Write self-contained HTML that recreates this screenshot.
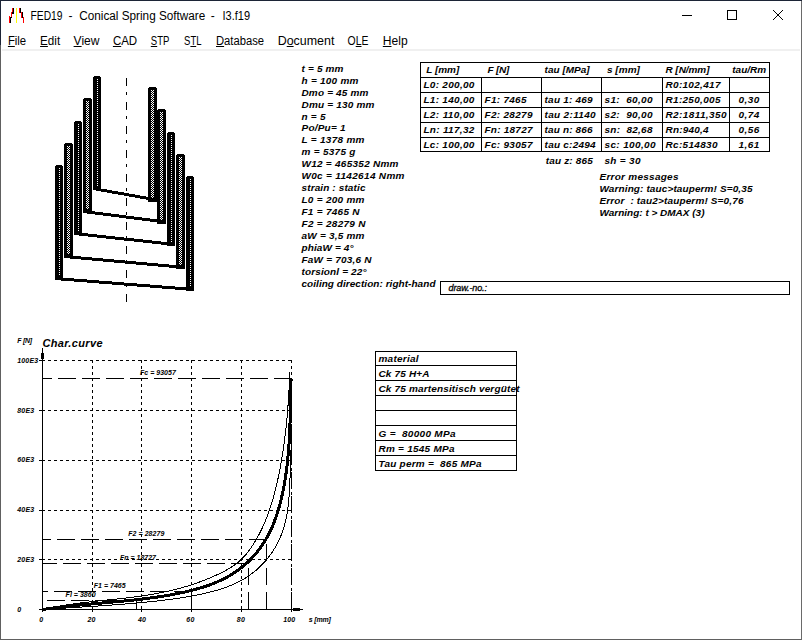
<!DOCTYPE html>
<html><head><meta charset="utf-8"><style>
html,body{margin:0;padding:0;background:#fff;}
body{width:802px;height:640px;position:relative;overflow:hidden;font-family:'Liberation Sans', sans-serif;}
.b{position:absolute;}
.ttl{position:absolute;top:8px;font-size:12px;color:#000;white-space:pre;line-height:15px;}
.mn{position:absolute;top:33px;font-size:12px;color:#000;white-space:pre;line-height:15px;}
svg{position:absolute;left:0;top:0;}
</style></head><body>
<svg width="802" height="640" viewBox="0 0 802 640" shape-rendering="crispEdges">
<rect x="0" y="0" width="802" height="1" fill="#1c2436"/>
<rect x="0" y="0" width="1" height="45" fill="#1c2436"/>
<rect x="0" y="45" width="1" height="595" fill="#606060"/>
<rect x="0" y="639" width="802" height="1" fill="#606060"/>
<rect x="801" y="1" width="1" height="639" fill="#6a6a6a"/>
<rect x="2" y="49" width="798" height="2" fill="#f0f0f0"/>
<rect x="12" y="8" width="1" height="6" fill="#ff0000"/>
<rect x="13" y="8" width="1" height="6" fill="#000"/>
<rect x="11" y="12" width="1" height="6" fill="#ff0000"/>
<rect x="12" y="12" width="1" height="2" fill="#000"/>
<rect x="11" y="17" width="1" height="1" fill="#000"/>
<rect x="9" y="16" width="1" height="7" fill="#ff0000"/>
<rect x="10" y="17" width="1" height="6" fill="#000"/>
<rect x="16" y="8" width="1" height="15" fill="#ffff00"/>
<rect x="19" y="8" width="1" height="5" fill="#ff0000"/>
<rect x="20" y="8" width="1" height="5" fill="#000"/>
<rect x="21" y="12" width="1" height="6" fill="#ff0000"/>
<rect x="22" y="12" width="1" height="6" fill="#000"/>
<rect x="23" y="17" width="1" height="6" fill="#ff0000"/>
<rect x="682" y="15" width="10" height="1" fill="#000"/>
<rect x="727.5" y="10.5" width="9" height="9" fill="none" stroke="#000" stroke-width="1"/>
<rect x="773" y="10" width="1" height="1" fill="#000"/><rect x="782" y="10" width="1" height="1" fill="#000"/><rect x="774" y="11" width="1" height="1" fill="#000"/><rect x="781" y="11" width="1" height="1" fill="#000"/><rect x="775" y="12" width="1" height="1" fill="#000"/><rect x="780" y="12" width="1" height="1" fill="#000"/><rect x="776" y="13" width="1" height="1" fill="#000"/><rect x="779" y="13" width="1" height="1" fill="#000"/><rect x="777" y="14" width="1" height="1" fill="#000"/><rect x="778" y="14" width="1" height="1" fill="#000"/><rect x="778" y="15" width="1" height="1" fill="#000"/><rect x="777" y="15" width="1" height="1" fill="#000"/><rect x="779" y="16" width="1" height="1" fill="#000"/><rect x="776" y="16" width="1" height="1" fill="#000"/><rect x="780" y="17" width="1" height="1" fill="#000"/><rect x="775" y="17" width="1" height="1" fill="#000"/><rect x="781" y="18" width="1" height="1" fill="#000"/><rect x="774" y="18" width="1" height="1" fill="#000"/><rect x="782" y="19" width="1" height="1" fill="#000"/><rect x="773" y="19" width="1" height="1" fill="#000"/>
<g><polygon points="93,187 157,198.5 157,201.5 93,190" fill="#000"/>
<polygon points="83,210 166,220.5 166,223.5 83,213" fill="#000"/>
<polygon points="74,232 175,243 175,246 74,235" fill="#000"/>
<polygon points="64,255 185,266 185,269 64,258" fill="#000"/>
<polygon points="55,277 194,288 194,291 55,280" fill="#000"/>
<rect x="94" y="76" width="6" height="1" fill="#000"/>
<rect x="93" y="77" width="8" height="113" fill="#000"/>
<line x1="97.5" y1="79" x2="97.5" y2="186" stroke="#fff" stroke-width="1" stroke-dasharray="1 1"/>
<rect x="84" y="98" width="7" height="1" fill="#000"/>
<rect x="83" y="99" width="9" height="114" fill="#000"/>
<line x1="86.5" y1="101" x2="86.5" y2="209" stroke="#fff" stroke-width="1" stroke-dasharray="1 1"/>
<line x1="88.5" y1="101" x2="88.5" y2="209" stroke="#fff" stroke-width="1" stroke-dasharray="1 1"/>
<line x1="87.5" y1="102" x2="87.5" y2="209" stroke="#fff" stroke-width="1" stroke-dasharray="1 1"/>
<rect x="75" y="121" width="6" height="1" fill="#000"/>
<rect x="74" y="122" width="8" height="113" fill="#000"/>
<line x1="78.5" y1="124" x2="78.5" y2="231" stroke="#fff" stroke-width="1" stroke-dasharray="1 1"/>
<rect x="65" y="143" width="7" height="1" fill="#000"/>
<rect x="64" y="144" width="9" height="114" fill="#000"/>
<line x1="67.5" y1="146" x2="67.5" y2="254" stroke="#fff" stroke-width="1" stroke-dasharray="1 1"/>
<line x1="69.5" y1="146" x2="69.5" y2="254" stroke="#fff" stroke-width="1" stroke-dasharray="1 1"/>
<line x1="68.5" y1="147" x2="68.5" y2="254" stroke="#fff" stroke-width="1" stroke-dasharray="1 1"/>
<rect x="56" y="165" width="6" height="1" fill="#000"/>
<rect x="55" y="166" width="8" height="114" fill="#000"/>
<line x1="59.5" y1="168" x2="59.5" y2="276" stroke="#fff" stroke-width="1" stroke-dasharray="1 1"/>
<rect x="149" y="87" width="7" height="1" fill="#000"/>
<rect x="148" y="88" width="9" height="113.5" fill="#000"/>
<line x1="151.5" y1="90" x2="151.5" y2="197.5" stroke="#fff" stroke-width="1" stroke-dasharray="1 1"/>
<line x1="153.5" y1="90" x2="153.5" y2="197.5" stroke="#fff" stroke-width="1" stroke-dasharray="1 1"/>
<line x1="152.5" y1="91" x2="152.5" y2="197.5" stroke="#fff" stroke-width="1" stroke-dasharray="1 1"/>
<rect x="158" y="109" width="7" height="1" fill="#000"/>
<rect x="157" y="110" width="9" height="113.5" fill="#000"/>
<line x1="160.5" y1="112" x2="160.5" y2="219.5" stroke="#fff" stroke-width="1" stroke-dasharray="1 1"/>
<line x1="162.5" y1="112" x2="162.5" y2="219.5" stroke="#fff" stroke-width="1" stroke-dasharray="1 1"/>
<line x1="161.5" y1="113" x2="161.5" y2="219.5" stroke="#fff" stroke-width="1" stroke-dasharray="1 1"/>
<rect x="168" y="132" width="6" height="1" fill="#000"/>
<rect x="167" y="133" width="8" height="113" fill="#000"/>
<line x1="171.5" y1="135" x2="171.5" y2="242" stroke="#fff" stroke-width="1" stroke-dasharray="1 1"/>
<rect x="177" y="154" width="7" height="1" fill="#000"/>
<rect x="176" y="155" width="9" height="114" fill="#000"/>
<line x1="179.5" y1="157" x2="179.5" y2="265" stroke="#fff" stroke-width="1" stroke-dasharray="1 1"/>
<line x1="181.5" y1="157" x2="181.5" y2="265" stroke="#fff" stroke-width="1" stroke-dasharray="1 1"/>
<line x1="180.5" y1="158" x2="180.5" y2="265" stroke="#fff" stroke-width="1" stroke-dasharray="1 1"/>
<rect x="187" y="176" width="6" height="1" fill="#000"/>
<rect x="186" y="177" width="8" height="114" fill="#000"/>
<line x1="190.5" y1="179" x2="190.5" y2="287" stroke="#fff" stroke-width="1" stroke-dasharray="1 1"/>
<line x1="126.5" y1="78" x2="126.5" y2="302" stroke="#000" stroke-width="1" stroke-dasharray="8 6 3 7" /></g>
<g><line x1="92.5" y1="360" x2="92.5" y2="609" stroke="#000" stroke-width="1" stroke-dasharray="3 3"/>
<line x1="141.5" y1="360" x2="141.5" y2="609" stroke="#000" stroke-width="1" stroke-dasharray="3 3"/>
<line x1="191.5" y1="360" x2="191.5" y2="609" stroke="#000" stroke-width="1" stroke-dasharray="3 3"/>
<line x1="241.5" y1="360" x2="241.5" y2="609" stroke="#000" stroke-width="1" stroke-dasharray="3 3"/>
<line x1="291.5" y1="360" x2="291.5" y2="609" stroke="#000" stroke-width="1" stroke-dasharray="3 3"/>
<line x1="42" y1="360.5" x2="292" y2="360.5" stroke="#000" stroke-width="1" stroke-dasharray="3 3"/>
<line x1="42" y1="410.5" x2="292" y2="410.5" stroke="#000" stroke-width="1" stroke-dasharray="3 3"/>
<line x1="42" y1="460.5" x2="292" y2="460.5" stroke="#000" stroke-width="1" stroke-dasharray="3 3"/>
<line x1="42" y1="510.5" x2="292" y2="510.5" stroke="#000" stroke-width="1" stroke-dasharray="3 3"/>
<line x1="42" y1="559.5" x2="292" y2="559.5" stroke="#000" stroke-width="1" stroke-dasharray="3 3"/>
<line x1="39" y1="360.5" x2="43" y2="360.5" stroke="#000" stroke-width="1"/>
<line x1="39" y1="410.5" x2="43" y2="410.5" stroke="#000" stroke-width="1"/>
<line x1="39" y1="460.5" x2="43" y2="460.5" stroke="#000" stroke-width="1"/>
<line x1="39" y1="510.5" x2="43" y2="510.5" stroke="#000" stroke-width="1"/>
<line x1="39" y1="559.5" x2="43" y2="559.5" stroke="#000" stroke-width="1"/>
<line x1="39" y1="609.5" x2="43" y2="609.5" stroke="#000" stroke-width="1"/>
<line x1="92.5" y1="609" x2="92.5" y2="612" stroke="#000" stroke-width="1"/>
<line x1="141.5" y1="609" x2="141.5" y2="612" stroke="#000" stroke-width="1"/>
<line x1="191.5" y1="609" x2="191.5" y2="612" stroke="#000" stroke-width="1"/>
<line x1="241.5" y1="609" x2="241.5" y2="612" stroke="#000" stroke-width="1"/>
<line x1="291.5" y1="609" x2="291.5" y2="612" stroke="#000" stroke-width="1"/>
<line x1="42.5" y1="609" x2="42.5" y2="612" stroke="#000" stroke-width="1"/>
<line x1="42.5" y1="348" x2="42.5" y2="610" stroke="#000" stroke-width="1"/>
<rect x="41" y="353" width="3" height="6" fill="#000"/>
<line x1="40" y1="609.5" x2="303" y2="609.5" stroke="#000" stroke-width="1"/>
<rect x="293" y="608" width="7" height="3" fill="#000"/>
<line x1="292" y1="378.5" x2="43" y2="378.5" stroke="#000" stroke-width="1" stroke-dasharray="18 6" />
<line x1="267" y1="539.5" x2="43" y2="539.5" stroke="#000" stroke-width="1" stroke-dasharray="18 6" />
<line x1="248.6" y1="563.5" x2="43" y2="563.5" stroke="#000" stroke-width="1" stroke-dasharray="18 6" />
<line x1="192" y1="591.5" x2="43" y2="591.5" stroke="#000" stroke-width="1" stroke-dasharray="18 6" />
<line x1="137" y1="600.5" x2="47" y2="600.5" stroke="#000" stroke-width="1" stroke-dasharray="18 6" />
<line x1="291.5" y1="609" x2="291.5" y2="378" stroke="#000" stroke-width="1" stroke-dasharray="17 7" />
<line x1="266.5" y1="609" x2="266.5" y2="539.5" stroke="#000" stroke-width="1" stroke-dasharray="17 7" />
<line x1="248.5" y1="609" x2="248.5" y2="563.5" stroke="#000" stroke-width="1" stroke-dasharray="17 7" />
<line x1="191.5" y1="609" x2="191.5" y2="590.5" stroke="#000" stroke-width="1" stroke-dasharray="17 7" />
<line x1="136.5" y1="609" x2="136.5" y2="600" stroke="#000" stroke-width="1" stroke-dasharray="17 7" />
<path d="M42.47,609.51 L44.52,609.21 L46.56,608.91 L48.61,608.62 L50.66,608.34 L52.70,608.07 L54.75,607.80 L56.79,607.55 L58.84,607.30 L60.88,607.05 L62.92,606.81 L64.96,606.58 L67.01,606.36 L69.05,606.13 L71.09,605.92 L73.13,605.71 L75.17,605.50 L77.21,605.30 L79.25,605.10 L81.28,604.90 L83.32,604.71 L85.36,604.52 L87.40,604.33 L89.43,604.15 L91.47,603.96 L93.50,603.78 L95.54,603.60 L97.58,603.42 L99.61,603.24 L101.64,603.06 L103.68,602.88 L105.71,602.70 L107.75,602.52 L109.78,602.34 L111.81,602.16 L113.84,601.97 L115.88,601.79 L117.91,601.60 L119.94,601.41 L121.97,601.21 L124.01,601.02 L126.04,600.81 L128.07,600.61 L130.10,600.40 L132.13,600.19 L134.16,599.97 L136.19,599.74 L138.22,599.51 L140.25,599.28 L142.28,599.04 L144.31,598.79 L146.34,598.53 L148.37,598.27 L150.40,598.00 L152.43,597.73 L154.46,597.44 L156.49,597.15 L158.52,596.84 L160.55,596.53 L162.58,596.21 L164.61,595.88 L166.64,595.54 L168.67,595.19 L170.70,594.83 L172.73,594.46 L174.76,594.08 L176.79,593.68 L178.82,593.28 L180.85,592.86 L182.87,592.42 L184.90,591.98 L186.92,591.51 L188.93,591.03 L190.95,590.54 L192.95,590.02 L194.95,589.49 L196.94,588.94 L198.93,588.37 L200.90,587.78 L202.87,587.17 L204.83,586.54 L206.78,585.88 L208.71,585.20 L210.64,584.50 L212.55,583.77 L214.45,583.02 L216.33,582.24 L218.20,581.43 L220.05,580.59 L221.89,579.73 L223.71,578.84 L225.52,577.91 L227.30,576.96 L229.07,575.98 L230.81,574.96 L232.54,573.91 L234.24,572.82 L235.93,571.70 L237.59,570.55 L239.22,569.36 L240.84,568.13 L242.43,566.87 L243.99,565.57 L245.53,564.24 L247.04,562.87 L248.52,561.46 L249.98,560.03 L251.41,558.56 L252.80,557.06 L254.17,555.54 L255.51,553.98 L256.82,552.40 L258.10,550.79 L259.35,549.16 L260.56,547.50 L261.75,545.82 L262.89,544.11 L264.01,542.39 L265.09,540.64 L266.13,538.88 L267.14,537.10 L268.11,535.30 L269.06,533.48 L269.96,531.65 L270.84,529.80 L271.69,527.94 L272.50,526.07 L273.29,524.18 L274.05,522.28 L274.78,520.36 L275.49,518.44 L276.16,516.50 L276.82,514.56 L277.45,512.61 L278.06,510.65 L278.64,508.68 L279.20,506.71 L279.75,504.73 L280.27,502.74 L280.78,500.76 L281.26,498.76 L281.73,496.77 L282.19,494.77 L282.62,492.77 L283.04,490.76 L283.45,488.76 L283.83,486.74 L284.21,484.73 L284.57,482.72 L284.91,480.70 L285.24,478.68 L285.55,476.65 L285.86,474.63 L286.14,472.60 L286.42,470.57 L286.68,468.54 L286.93,466.51 L287.17,464.47 L287.40,462.44 L287.62,460.40 L287.82,458.36 L288.02,456.32 L288.20,454.27 L288.38,452.23 L288.55,450.18 L288.70,448.14 L288.85,446.09 L288.99,444.04 L289.12,441.99 L289.25,439.94 L289.36,437.89 L289.47,435.84 L289.58,433.79 L289.67,431.74 L289.76,429.68 L289.85,427.63 L289.93,425.58 L290.00,423.53 L290.07,421.47 L290.14,419.42 L290.20,417.37 L290.26,415.32 L290.31,413.27 L290.36,411.21 L290.41,409.16 L290.46,407.11 L290.51,405.07 L290.55,403.02 L290.59,400.97 L290.64,398.92 L290.68,396.88 L290.72,394.84 L290.76,392.79 L290.80,390.75 L290.84,388.71 L290.89,386.67 L290.93,384.64 L290.98,382.60 L291.03,380.57 L291.08,378.54" fill="none" stroke="#000" stroke-width="3" stroke-linejoin="round" shape-rendering="crispEdges"/>
<path d="M42.52,609.36 L44.51,608.92 L46.50,608.49 L48.49,608.08 L50.48,607.68 L52.48,607.29 L54.48,606.92 L56.48,606.56 L58.48,606.21 L60.49,605.87 L62.49,605.54 L64.50,605.22 L66.51,604.92 L68.53,604.62 L70.54,604.33 L72.56,604.04 L74.57,603.77 L76.59,603.50 L78.61,603.24 L80.64,602.99 L82.66,602.74 L84.68,602.50 L86.71,602.26 L88.73,602.03 L90.76,601.80 L92.79,601.57 L94.81,601.35 L96.84,601.13 L98.87,600.91 L100.90,600.69 L102.93,600.48 L104.96,600.26 L106.99,600.05 L109.01,599.83 L111.04,599.62 L113.07,599.40 L115.10,599.18 L117.13,598.96 L119.15,598.74 L121.18,598.51 L123.21,598.28 L125.23,598.05 L127.25,597.81 L129.28,597.56 L131.30,597.31 L133.32,597.06 L135.34,596.80 L137.35,596.53 L139.37,596.25 L141.38,595.97 L143.40,595.68 L145.41,595.38 L147.42,595.07 L149.42,594.75 L151.43,594.42 L153.43,594.08 L155.43,593.73 L157.43,593.36 L159.43,592.99 L161.42,592.60 L163.41,592.20 L165.40,591.79 L167.38,591.36 L169.36,590.91 L171.34,590.46 L173.32,589.98 L175.29,589.50 L177.26,588.99 L179.23,588.47 L181.19,587.93 L183.15,587.38 L185.10,586.81 L187.05,586.22 L188.99,585.62 L190.94,585.00 L192.87,584.36 L194.80,583.71 L196.73,583.04 L198.65,582.35 L200.56,581.65 L202.47,580.93 L204.37,580.20 L206.27,579.44 L208.16,578.67 L210.04,577.89 L211.92,577.08 L213.79,576.26 L215.65,575.43 L217.51,574.57 L219.36,573.70 L221.19,572.80 L223.00,571.88 L224.80,570.93 L226.58,569.95 L228.34,568.95 L230.06,567.90 L231.76,566.82 L233.43,565.70 L235.07,564.54 L236.67,563.34 L238.23,562.09 L239.74,560.79 L241.21,559.43 L242.64,558.03 L244.03,556.58 L245.37,555.09 L246.68,553.55 L247.94,551.98 L249.17,550.37 L250.37,548.73 L251.53,547.05 L252.66,545.36 L253.76,543.63 L254.84,541.89 L255.88,540.12 L256.90,538.34 L257.90,536.55 L258.87,534.75 L259.82,532.93 L260.74,531.10 L261.64,529.26 L262.51,527.41 L263.35,525.56 L264.18,523.69 L264.98,521.82 L265.75,519.94 L266.51,518.05 L267.24,516.16 L267.96,514.25 L268.65,512.34 L269.32,510.43 L269.98,508.51 L270.61,506.58 L271.23,504.65 L271.83,502.71 L272.41,500.76 L272.98,498.81 L273.53,496.86 L274.06,494.90 L274.58,492.94 L275.09,490.97 L275.59,489.00 L276.07,487.02 L276.54,485.05 L277.00,483.07 L277.44,481.08 L277.88,479.10 L278.31,477.11 L278.72,475.12 L279.13,473.13 L279.53,471.13 L279.92,469.14 L280.30,467.14 L280.67,465.14 L281.03,463.14 L281.38,461.13 L281.72,459.13 L282.05,457.12 L282.38,455.11 L282.70,453.10 L283.00,451.09 L283.30,449.07 L283.60,447.06 L283.88,445.04 L284.16,443.02 L284.43,441.00 L284.69,438.98 L284.94,436.96 L285.19,434.94 L285.42,432.92 L285.66,430.89 L285.88,428.87 L286.10,426.84 L286.31,424.81 L286.52,422.78 L286.72,420.76 L286.91,418.73 L287.09,416.70 L287.27,414.67 L287.45,412.64 L287.62,410.60 L287.78,408.57 L287.94,406.54 L288.09,404.51 L288.23,402.48 L288.37,400.44 L288.51,398.41 L288.64,396.38 L288.77,394.34 L288.89,392.31 L289.01,390.28 L289.12,388.25 L289.23,386.21 L289.33,384.18 L289.43,382.15 L289.53,380.12 L289.62,378.09 L289.71,376.06 L289.80,374.03 L289.88,372.00" fill="none" stroke="#000" stroke-width="1" shape-rendering="crispEdges"/>
<path d="M42.51,609.59 L44.36,609.46 L46.22,609.33 L48.07,609.20 L49.92,609.07 L51.78,608.95 L53.63,608.82 L55.49,608.70 L57.34,608.57 L59.20,608.45 L61.05,608.33 L62.91,608.21 L64.76,608.10 L66.62,607.98 L68.47,607.86 L70.33,607.74 L72.18,607.63 L74.04,607.51 L75.89,607.39 L77.75,607.28 L79.60,607.16 L81.46,607.05 L83.31,606.93 L85.17,606.81 L87.02,606.70 L88.88,606.58 L90.74,606.46 L92.59,606.34 L94.44,606.22 L96.30,606.10 L98.15,605.98 L100.01,605.86 L101.86,605.74 L103.72,605.61 L105.57,605.48 L107.42,605.35 L109.28,605.22 L111.13,605.09 L112.98,604.96 L114.84,604.82 L116.69,604.69 L118.54,604.55 L120.39,604.40 L122.25,604.26 L124.10,604.11 L125.95,603.96 L127.80,603.81 L129.65,603.66 L131.50,603.50 L133.35,603.34 L135.20,603.17 L137.05,603.01 L138.90,602.84 L140.74,602.66 L142.59,602.49 L144.44,602.31 L146.28,602.12 L148.13,601.93 L149.98,601.74 L151.82,601.54 L153.66,601.34 L155.51,601.14 L157.35,600.93 L159.20,600.72 L161.04,600.50 L162.88,600.28 L164.72,600.05 L166.56,599.82 L168.40,599.58 L170.24,599.34 L172.08,599.09 L173.92,598.84 L175.75,598.58 L177.59,598.32 L179.43,598.05 L181.26,597.77 L183.09,597.49 L184.93,597.20 L186.76,596.90 L188.59,596.59 L190.42,596.27 L192.25,595.94 L194.07,595.61 L195.90,595.26 L197.73,594.89 L199.55,594.52 L201.37,594.13 L203.19,593.73 L205.01,593.32 L206.82,592.89 L208.64,592.45 L210.45,591.99 L212.26,591.51 L214.07,591.02 L215.88,590.51 L217.68,589.99 L219.48,589.44 L221.28,588.88 L223.07,588.29 L224.85,587.68 L226.62,587.05 L228.38,586.39 L230.13,585.71 L231.87,585.00 L233.59,584.26 L235.29,583.49 L236.98,582.70 L238.65,581.87 L240.31,581.01 L241.94,580.12 L243.54,579.20 L245.13,578.24 L246.69,577.25 L248.23,576.22 L249.75,575.17 L251.24,574.08 L252.71,572.97 L254.16,571.83 L255.57,570.65 L256.97,569.45 L258.34,568.22 L259.68,566.96 L260.99,565.68 L262.28,564.37 L263.54,563.03 L264.78,561.67 L265.98,560.28 L267.16,558.87 L268.31,557.44 L269.43,555.99 L270.52,554.51 L271.58,553.01 L272.61,551.48 L273.60,549.94 L274.57,548.38 L275.51,546.80 L276.41,545.19 L277.28,543.57 L278.12,541.94 L278.93,540.28 L279.70,538.61 L280.44,536.92 L281.14,535.22 L281.81,533.50 L282.45,531.76 L283.05,530.02 L283.61,528.25 L284.14,526.48 L284.64,524.69 L285.11,522.90 L285.54,521.09 L285.95,519.27 L286.32,517.44 L286.68,515.60 L287.00,513.76 L287.30,511.91 L287.58,510.05 L287.84,508.18 L288.07,506.31 L288.29,504.44 L288.49,502.56 L288.67,500.68 L288.84,498.79 L288.99,496.90 L289.13,495.01 L289.26,493.13 L289.38,491.24 L289.49,489.35 L289.59,487.46 L289.68,485.58 L289.77,483.69 L289.85,481.82 L289.94,479.94 L290.02,478.07 L290.09,476.21 L290.17,474.34 L290.24,472.49 L290.32,470.63 L290.39,468.78 L290.46,466.94 L290.53,465.09 L290.59,463.25 L290.65,461.41 L290.72,459.57 L290.78,457.73 L290.83,455.89 L290.89,454.05 L290.94,452.22 L290.99,450.38 L291.04,448.54 L291.09,446.71 L291.14,444.87 L291.18,443.03 L291.22,441.19 L291.26,439.34 L291.29,437.50 L291.32,435.65 L291.35,433.79 L291.38,431.94 L291.41,430.08" fill="none" stroke="#000" stroke-width="1" shape-rendering="crispEdges"/></g>
<g><rect x="420.5" y="62.5" width="349" height="89" fill="none" stroke="#000" stroke-width="1"/>
<line x1="420" y1="77.5" x2="770" y2="77.5" stroke="#000" stroke-width="1"/>
<line x1="420" y1="92.5" x2="770" y2="92.5" stroke="#000" stroke-width="1"/>
<line x1="420" y1="107.5" x2="770" y2="107.5" stroke="#000" stroke-width="1"/>
<line x1="420" y1="122.5" x2="770" y2="122.5" stroke="#000" stroke-width="1"/>
<line x1="420" y1="137.5" x2="770" y2="137.5" stroke="#000" stroke-width="1"/>
<line x1="481.5" y1="77" x2="481.5" y2="152" stroke="#000" stroke-width="1"/>
<line x1="541.5" y1="77" x2="541.5" y2="152" stroke="#000" stroke-width="1"/>
<line x1="601.5" y1="77" x2="601.5" y2="152" stroke="#000" stroke-width="1"/>
<line x1="662.5" y1="77" x2="662.5" y2="152" stroke="#000" stroke-width="1"/>
<line x1="729.5" y1="77" x2="729.5" y2="152" stroke="#000" stroke-width="1"/>
<rect x="440.5" y="281.5" width="349" height="13" fill="none" stroke="#000" stroke-width="1"/>
<rect x="375.5" y="351.5" width="141" height="119" fill="none" stroke="#000" stroke-width="1"/>
<line x1="375" y1="365.5" x2="517" y2="365.5" stroke="#000" stroke-width="1"/>
<line x1="375" y1="380.5" x2="517" y2="380.5" stroke="#000" stroke-width="1"/>
<line x1="375" y1="395.5" x2="517" y2="395.5" stroke="#000" stroke-width="1"/>
<line x1="375" y1="410.5" x2="517" y2="410.5" stroke="#000" stroke-width="1"/>
<line x1="375" y1="425.5" x2="517" y2="425.5" stroke="#000" stroke-width="1"/>
<line x1="375" y1="440.5" x2="517" y2="440.5" stroke="#000" stroke-width="1"/>
<line x1="375" y1="455.5" x2="517" y2="455.5" stroke="#000" stroke-width="1"/></g>
<g font-family="'Liberation Sans', sans-serif" fill="#000" shape-rendering="geometricPrecision"><text x="301.5" y="71.8" font-size="10" font-weight="bold" font-style="italic" textLength="42" lengthAdjust="spacing" xml:space="preserve" transform="matrix(1,0,0,0.95,0,3.590)" >t = 5 mm</text>
<text x="301.5" y="83.74" font-size="10" font-weight="bold" font-style="italic" textLength="57" lengthAdjust="spacing" xml:space="preserve" transform="matrix(1,0,0,0.95,0,4.187)" >h = 100 mm</text>
<text x="301.5" y="95.67999999999999" font-size="10" font-weight="bold" font-style="italic" textLength="67" lengthAdjust="spacing" xml:space="preserve" transform="matrix(1,0,0,0.95,0,4.784)" >Dmo = 45 mm</text>
<text x="301.5" y="107.62" font-size="10" font-weight="bold" font-style="italic" textLength="73" lengthAdjust="spacing" xml:space="preserve" transform="matrix(1,0,0,0.95,0,5.381)" >Dmu = 130 mm</text>
<text x="301.5" y="119.56" font-size="10" font-weight="bold" font-style="italic" textLength="24" lengthAdjust="spacing" xml:space="preserve" transform="matrix(1,0,0,0.95,0,5.978)" >n = 5</text>
<text x="301.5" y="131.5" font-size="10" font-weight="bold" font-style="italic" textLength="44" lengthAdjust="spacing" xml:space="preserve" transform="matrix(1,0,0,0.95,0,6.575)" >Po/Pu= 1</text>
<text x="301.5" y="143.44" font-size="10" font-weight="bold" font-style="italic" textLength="63" lengthAdjust="spacing" xml:space="preserve" transform="matrix(1,0,0,0.95,0,7.172)" >L = 1378 mm</text>
<text x="301.5" y="155.38" font-size="10" font-weight="bold" font-style="italic" textLength="54" lengthAdjust="spacing" xml:space="preserve" transform="matrix(1,0,0,0.95,0,7.769)" >m = 5375 g</text>
<text x="301.5" y="167.32" font-size="10" font-weight="bold" font-style="italic" textLength="97" lengthAdjust="spacing" xml:space="preserve" transform="matrix(1,0,0,0.95,0,8.366)" >W12 = 465352 Nmm</text>
<text x="301.5" y="179.26" font-size="10" font-weight="bold" font-style="italic" textLength="103" lengthAdjust="spacing" xml:space="preserve" transform="matrix(1,0,0,0.95,0,8.963)" >W0c = 1142614 Nmm</text>
<text x="301.5" y="191.2" font-size="10" font-weight="bold" font-style="italic" textLength="64" lengthAdjust="spacing" xml:space="preserve" transform="matrix(1,0,0,0.95,0,9.560)" >strain : static</text>
<text x="301.5" y="203.14" font-size="10" font-weight="bold" font-style="italic" textLength="63" lengthAdjust="spacing" xml:space="preserve" transform="matrix(1,0,0,0.95,0,10.157)" >L0 = 200 mm</text>
<text x="301.5" y="215.07999999999998" font-size="10" font-weight="bold" font-style="italic" textLength="58" lengthAdjust="spacing" xml:space="preserve" transform="matrix(1,0,0,0.95,0,10.754)" >F1 = 7465 N</text>
<text x="301.5" y="227.01999999999998" font-size="10" font-weight="bold" font-style="italic" textLength="64" lengthAdjust="spacing" xml:space="preserve" transform="matrix(1,0,0,0.95,0,11.351)" >F2 = 28279 N</text>
<text x="301.5" y="238.95999999999998" font-size="10" font-weight="bold" font-style="italic" textLength="63" lengthAdjust="spacing" xml:space="preserve" transform="matrix(1,0,0,0.95,0,11.948)" >aW = 3,5 mm</text>
<text x="301.5" y="250.89999999999998" font-size="10" font-weight="bold" font-style="italic" textLength="52" lengthAdjust="spacing" xml:space="preserve" transform="matrix(1,0,0,0.95,0,12.545)" >phiaW = 4°</text>
<text x="301.5" y="262.84" font-size="10" font-weight="bold" font-style="italic" textLength="70" lengthAdjust="spacing" xml:space="preserve" transform="matrix(1,0,0,0.95,0,13.142)" >FaW = 703,6 N</text>
<text x="301.5" y="274.78" font-size="10" font-weight="bold" font-style="italic" textLength="65" lengthAdjust="spacing" xml:space="preserve" transform="matrix(1,0,0,0.95,0,13.739)" >torsionl = 22°</text>
<text x="301.5" y="286.71999999999997" font-size="10" font-weight="bold" font-style="italic" textLength="134" lengthAdjust="spacing" xml:space="preserve" transform="matrix(1,0,0,0.95,0,14.336)" >coiling direction: right-hand</text>
<text x="426.3" y="73" font-size="10" font-weight="bold" font-style="italic" textLength="33" lengthAdjust="spacing" xml:space="preserve" transform="matrix(1,0,0,0.95,0,3.650)" >L [mm]</text>
<text x="487.4" y="73" font-size="10" font-weight="bold" font-style="italic" textLength="22" lengthAdjust="spacing" xml:space="preserve" transform="matrix(1,0,0,0.95,0,3.650)" >F [N]</text>
<text x="544.6" y="73" font-size="10" font-weight="bold" font-style="italic" textLength="45" lengthAdjust="spacing" xml:space="preserve" transform="matrix(1,0,0,0.95,0,3.650)" >tau [MPa]</text>
<text x="606.9" y="73" font-size="10" font-weight="bold" font-style="italic" textLength="33" lengthAdjust="spacing" xml:space="preserve" transform="matrix(1,0,0,0.95,0,3.650)" >s [mm]</text>
<text x="665.5" y="73" font-size="10" font-weight="bold" font-style="italic" textLength="44" lengthAdjust="spacing" xml:space="preserve" transform="matrix(1,0,0,0.95,0,3.650)" >R [N/mm]</text>
<text x="732.2" y="73" font-size="10" font-weight="bold" font-style="italic" textLength="34" lengthAdjust="spacing" xml:space="preserve" transform="matrix(1,0,0,0.95,0,3.650)" >tau/Rm</text>
<text x="423.4" y="88" font-size="10" font-weight="bold" font-style="italic" textLength="51" lengthAdjust="spacing" xml:space="preserve" transform="matrix(1,0,0,0.95,0,4.400)" >L0: 200,00</text>
<text x="665.5" y="88" font-size="10" font-weight="bold" font-style="italic" textLength="55" lengthAdjust="spacing" xml:space="preserve" transform="matrix(1,0,0,0.95,0,4.400)" >R0:102,417</text>
<text x="423.4" y="103" font-size="10" font-weight="bold" font-style="italic" textLength="51" lengthAdjust="spacing" xml:space="preserve" transform="matrix(1,0,0,0.95,0,5.150)" >L1: 140,00</text>
<text x="484.5" y="103" font-size="10" font-weight="bold" font-style="italic" textLength="42" lengthAdjust="spacing" xml:space="preserve" transform="matrix(1,0,0,0.95,0,5.150)" >F1: 7465</text>
<text x="544.6" y="103" font-size="10" font-weight="bold" font-style="italic" textLength="48" lengthAdjust="spacing" xml:space="preserve" transform="matrix(1,0,0,0.95,0,5.150)" >tau 1: 469</text>
<text x="604.5" y="103" font-size="10" font-weight="bold" font-style="italic" textLength="48" lengthAdjust="spacing" xml:space="preserve" transform="matrix(1,0,0,0.95,0,5.150)" >s1:  60,00</text>
<text x="665.5" y="103" font-size="10" font-weight="bold" font-style="italic" textLength="55" lengthAdjust="spacing" xml:space="preserve" transform="matrix(1,0,0,0.95,0,5.150)" >R1:250,005</text>
<text x="738.4" y="103" font-size="10" font-weight="bold" font-style="italic" textLength="21" lengthAdjust="spacing" xml:space="preserve" transform="matrix(1,0,0,0.95,0,5.150)" >0,30</text>
<text x="423.4" y="118" font-size="10" font-weight="bold" font-style="italic" textLength="51" lengthAdjust="spacing" xml:space="preserve" transform="matrix(1,0,0,0.95,0,5.900)" >L2: 110,00</text>
<text x="484.5" y="118" font-size="10" font-weight="bold" font-style="italic" textLength="48" lengthAdjust="spacing" xml:space="preserve" transform="matrix(1,0,0,0.95,0,5.900)" >F2: 28279</text>
<text x="544.6" y="118" font-size="10" font-weight="bold" font-style="italic" textLength="51" lengthAdjust="spacing" xml:space="preserve" transform="matrix(1,0,0,0.95,0,5.900)" >tau 2:1140</text>
<text x="604.5" y="118" font-size="10" font-weight="bold" font-style="italic" textLength="48" lengthAdjust="spacing" xml:space="preserve" transform="matrix(1,0,0,0.95,0,5.900)" >s2:  90,00</text>
<text x="665.5" y="118" font-size="10" font-weight="bold" font-style="italic" textLength="61" lengthAdjust="spacing" xml:space="preserve" transform="matrix(1,0,0,0.95,0,5.900)" >R2:1811,350</text>
<text x="738.4" y="118" font-size="10" font-weight="bold" font-style="italic" textLength="21" lengthAdjust="spacing" xml:space="preserve" transform="matrix(1,0,0,0.95,0,5.900)" >0,74</text>
<text x="423.4" y="133" font-size="10" font-weight="bold" font-style="italic" textLength="51" lengthAdjust="spacing" xml:space="preserve" transform="matrix(1,0,0,0.95,0,6.650)" >Ln: 117,32</text>
<text x="484.5" y="133" font-size="10" font-weight="bold" font-style="italic" textLength="48" lengthAdjust="spacing" xml:space="preserve" transform="matrix(1,0,0,0.95,0,6.650)" >Fn: 18727</text>
<text x="544.6" y="133" font-size="10" font-weight="bold" font-style="italic" textLength="48" lengthAdjust="spacing" xml:space="preserve" transform="matrix(1,0,0,0.95,0,6.650)" >tau n: 866</text>
<text x="604.5" y="133" font-size="10" font-weight="bold" font-style="italic" textLength="48" lengthAdjust="spacing" xml:space="preserve" transform="matrix(1,0,0,0.95,0,6.650)" >sn:  82,68</text>
<text x="665.5" y="133" font-size="10" font-weight="bold" font-style="italic" textLength="43" lengthAdjust="spacing" xml:space="preserve" transform="matrix(1,0,0,0.95,0,6.650)" >Rn:940,4</text>
<text x="738.4" y="133" font-size="10" font-weight="bold" font-style="italic" textLength="21" lengthAdjust="spacing" xml:space="preserve" transform="matrix(1,0,0,0.95,0,6.650)" >0,56</text>
<text x="423.4" y="148" font-size="10" font-weight="bold" font-style="italic" textLength="51" lengthAdjust="spacing" xml:space="preserve" transform="matrix(1,0,0,0.95,0,7.400)" >Lc: 100,00</text>
<text x="484.5" y="148" font-size="10" font-weight="bold" font-style="italic" textLength="48" lengthAdjust="spacing" xml:space="preserve" transform="matrix(1,0,0,0.95,0,7.400)" >Fc: 93057</text>
<text x="544.6" y="148" font-size="10" font-weight="bold" font-style="italic" textLength="51" lengthAdjust="spacing" xml:space="preserve" transform="matrix(1,0,0,0.95,0,7.400)" >tau c:2494</text>
<text x="604.5" y="148" font-size="10" font-weight="bold" font-style="italic" textLength="51" lengthAdjust="spacing" xml:space="preserve" transform="matrix(1,0,0,0.95,0,7.400)" >sc: 100,00</text>
<text x="665.5" y="148" font-size="10" font-weight="bold" font-style="italic" textLength="52" lengthAdjust="spacing" xml:space="preserve" transform="matrix(1,0,0,0.95,0,7.400)" >Rc:514830</text>
<text x="738.4" y="148" font-size="10" font-weight="bold" font-style="italic" textLength="21" lengthAdjust="spacing" xml:space="preserve" transform="matrix(1,0,0,0.95,0,7.400)" >1,61</text>
<text x="545.8" y="163.6" font-size="10" font-weight="bold" font-style="italic" textLength="47" lengthAdjust="spacing" xml:space="preserve" transform="matrix(1,0,0,0.95,0,8.180)" >tau z: 865</text>
<text x="604.5" y="163.6" font-size="10" font-weight="bold" font-style="italic" textLength="36" lengthAdjust="spacing" xml:space="preserve" transform="matrix(1,0,0,0.95,0,8.180)" >sh = 30</text>
<text x="599.5" y="180.5" font-size="10" font-weight="bold" font-style="italic" textLength="79" lengthAdjust="spacing" xml:space="preserve" transform="matrix(1,0,0,0.95,0,9.025)" >Error messages</text>
<text x="599.5" y="192.5" font-size="10" font-weight="bold" font-style="italic" textLength="153" lengthAdjust="spacing" xml:space="preserve" transform="matrix(1,0,0,0.95,0,9.625)" >Warning: tauc&gt;tauperm! S=0,35</text>
<text x="599.5" y="204.5" font-size="10" font-weight="bold" font-style="italic" textLength="144" lengthAdjust="spacing" xml:space="preserve" transform="matrix(1,0,0,0.95,0,10.225)" >Error  : tau2&gt;tauperm! S=0,76</text>
<text x="599.5" y="216.5" font-size="10" font-weight="bold" font-style="italic" textLength="105" lengthAdjust="spacing" xml:space="preserve" transform="matrix(1,0,0,0.95,0,10.825)" >Warning: t &gt; DMAX (3)</text>
<text x="448.5" y="290.6" font-size="9" font-weight="normal" font-style="italic" textLength="38.5" lengthAdjust="spacing" xml:space="preserve" stroke="#000" stroke-width="0.3">draw.-no.:</text>
<text x="378.5" y="361.8" font-size="10" font-weight="bold" font-style="italic" textLength="40" lengthAdjust="spacing" xml:space="preserve" transform="matrix(1,0,0,0.95,0,18.090)" >material</text>
<text x="378.5" y="376.8" font-size="10" font-weight="bold" font-style="italic" textLength="51" lengthAdjust="spacing" xml:space="preserve" transform="matrix(1,0,0,0.95,0,18.840)" >Ck 75 H+A</text>
<text x="378.5" y="391.8" font-size="10" font-weight="bold" font-style="italic" textLength="141" lengthAdjust="spacing" xml:space="preserve" transform="matrix(1,0,0,0.95,0,19.590)" >Ck 75 martensitisch vergütet</text>
<text x="378.5" y="436.8" font-size="10" font-weight="bold" font-style="italic" textLength="77" lengthAdjust="spacing" xml:space="preserve" transform="matrix(1,0,0,0.95,0,21.840)" >G =  80000 MPa</text>
<text x="378.5" y="451.8" font-size="10" font-weight="bold" font-style="italic" textLength="76" lengthAdjust="spacing" xml:space="preserve" transform="matrix(1,0,0,0.95,0,22.590)" >Rm = 1545 MPa</text>
<text x="378.5" y="466.8" font-size="10" font-weight="bold" font-style="italic" textLength="103" lengthAdjust="spacing" xml:space="preserve" transform="matrix(1,0,0,0.95,0,23.340)" >Tau perm =  865 MPa</text>
<text x="17.2" y="342.5" font-size="7" font-weight="bold" font-style="italic" textLength="15" lengthAdjust="spacing" xml:space="preserve" >F [N]</text>
<text x="42.5" y="347" font-size="11" font-weight="bold" font-style="italic" textLength="60" lengthAdjust="spacing" xml:space="preserve" >Char.curve</text>
<text x="17.2" y="362.7" font-size="7" font-weight="bold" font-style="italic" textLength="21" lengthAdjust="spacing" xml:space="preserve" >100E3</text>
<text x="17.2" y="412.8" font-size="7" font-weight="bold" font-style="italic" textLength="17" lengthAdjust="spacing" xml:space="preserve" >80E3</text>
<text x="17.2" y="462" font-size="7" font-weight="bold" font-style="italic" textLength="17" lengthAdjust="spacing" xml:space="preserve" >60E3</text>
<text x="17.2" y="512" font-size="7" font-weight="bold" font-style="italic" textLength="17" lengthAdjust="spacing" xml:space="preserve" >40E3</text>
<text x="17.2" y="562" font-size="7" font-weight="bold" font-style="italic" textLength="17" lengthAdjust="spacing" xml:space="preserve" >20E3</text>
<text x="17.2" y="612" font-size="7" font-weight="bold" font-style="italic" textLength="4" lengthAdjust="spacing" xml:space="preserve" >0</text>
<text x="39.3" y="621.5" font-size="7" font-weight="bold" font-style="italic" textLength="4" lengthAdjust="spacing" xml:space="preserve" >0</text>
<text x="87.5" y="621.5" font-size="7" font-weight="bold" font-style="italic" textLength="8" lengthAdjust="spacing" xml:space="preserve" >20</text>
<text x="137.9" y="621.5" font-size="7" font-weight="bold" font-style="italic" textLength="8" lengthAdjust="spacing" xml:space="preserve" >40</text>
<text x="186.3" y="621.5" font-size="7" font-weight="bold" font-style="italic" textLength="8" lengthAdjust="spacing" xml:space="preserve" >60</text>
<text x="236.8" y="621.5" font-size="7" font-weight="bold" font-style="italic" textLength="8" lengthAdjust="spacing" xml:space="preserve" >80</text>
<text x="283.2" y="621.5" font-size="7" font-weight="bold" font-style="italic" textLength="12" lengthAdjust="spacing" xml:space="preserve" >100</text>
<text x="308.8" y="621.5" font-size="7" font-weight="bold" font-style="italic" textLength="22" lengthAdjust="spacing" xml:space="preserve" >s [mm]</text>
<text x="139.9" y="374.5" font-size="7" font-weight="bold" font-style="italic" textLength="36" lengthAdjust="spacing" xml:space="preserve" >Fc = 93057</text>
<text x="128.3" y="536" font-size="7" font-weight="bold" font-style="italic" textLength="36" lengthAdjust="spacing" xml:space="preserve" >F2 = 28279</text>
<text x="120" y="560" font-size="7" font-weight="bold" font-style="italic" textLength="36" lengthAdjust="spacing" xml:space="preserve" >Fn = 18727</text>
<text x="93.7" y="587.7" font-size="7" font-weight="bold" font-style="italic" textLength="32" lengthAdjust="spacing" xml:space="preserve" >F1 = 7465</text>
<text x="65.6" y="596.6" font-size="7" font-weight="bold" font-style="italic" textLength="30" lengthAdjust="spacing" xml:space="preserve" >Fl = 3860</text>
<text x="30.5" y="20" font-size="12.5" textLength="32" lengthAdjust="spacingAndGlyphs" xml:space="preserve">FED19</text>
<text x="68.5" y="20" font-size="12.5" textLength="4" lengthAdjust="spacingAndGlyphs" xml:space="preserve">-</text>
<text x="79.3" y="20" font-size="12.5" textLength="126" lengthAdjust="spacingAndGlyphs" xml:space="preserve">Conical Spring Software</text>
<text x="210.8" y="20" font-size="12.5" textLength="4" lengthAdjust="spacingAndGlyphs" xml:space="preserve">-</text>
<text x="222.5" y="20" font-size="12.5" textLength="27.5" lengthAdjust="spacingAndGlyphs" xml:space="preserve">I3.f19</text>
<text x="7.9" y="45" font-size="12" textLength="18.3" lengthAdjust="spacingAndGlyphs" xml:space="preserve">File</text>
<rect x="7.9" y="46" width="6.9" height="1" fill="#000"/>
<text x="40.1" y="45" font-size="12" textLength="20.1" lengthAdjust="spacingAndGlyphs" xml:space="preserve">Edit</text>
<rect x="40.1" y="46" width="7.8" height="1" fill="#000"/>
<text x="73.6" y="45" font-size="12" textLength="25.9" lengthAdjust="spacingAndGlyphs" xml:space="preserve">View</text>
<rect x="73.6" y="46" width="8.0" height="1" fill="#000"/>
<text x="112.9" y="45" font-size="12" textLength="24.3" lengthAdjust="spacingAndGlyphs" xml:space="preserve">CAD</text>
<rect x="112.9" y="46" width="8.3" height="1" fill="#000"/>
<text x="150.8" y="45" font-size="12" textLength="18.6" lengthAdjust="spacingAndGlyphs" xml:space="preserve">STP</text>
<rect x="150.8" y="46" width="6.4" height="1" fill="#000"/>
<text x="184.1" y="45" font-size="12" textLength="17.4" lengthAdjust="spacingAndGlyphs" xml:space="preserve">STL</text>
<rect x="190.4" y="46" width="5.8" height="1" fill="#000"/>
<text x="216.0" y="45" font-size="12" textLength="48.1" lengthAdjust="spacingAndGlyphs" xml:space="preserve">Database</text>
<rect x="216.0" y="46" width="8.1" height="1" fill="#000"/>
<text x="277.7" y="45" font-size="12" textLength="56.7" lengthAdjust="spacingAndGlyphs" xml:space="preserve">Document</text>
<rect x="286.7" y="46" width="6.9" height="1" fill="#000"/>
<text x="347.6" y="45" font-size="12" textLength="20.8" lengthAdjust="spacingAndGlyphs" xml:space="preserve">OLE</text>
<rect x="355.7" y="46" width="5.8" height="1" fill="#000"/>
<text x="382.8" y="45" font-size="12" textLength="24.8" lengthAdjust="spacingAndGlyphs" xml:space="preserve">Help</text>
<rect x="382.8" y="46" width="8.7" height="1" fill="#000"/></g>
</svg>
</body></html>
